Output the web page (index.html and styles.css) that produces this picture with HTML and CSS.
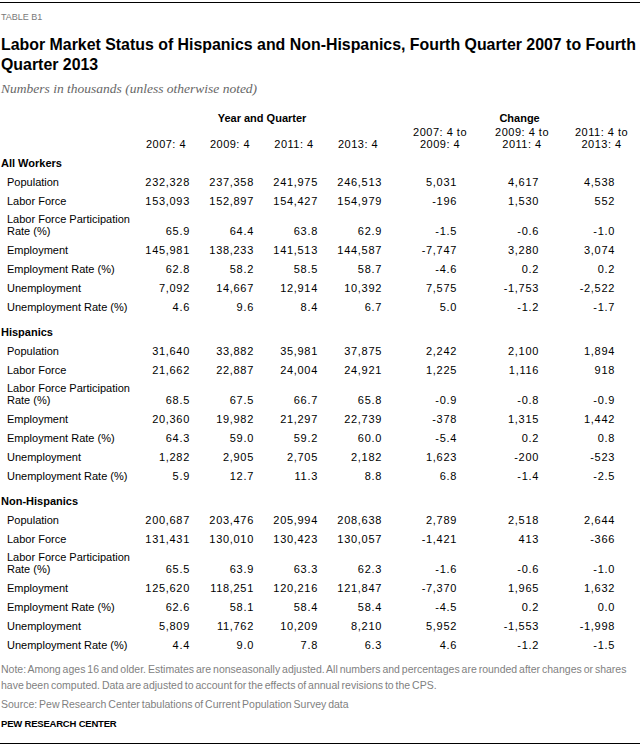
FILE: index.html
```html
<!DOCTYPE html>
<html lang="en">
<head>
<meta charset="utf-8">
<title>Table B1</title>
<link rel="stylesheet" href="styles.css">
</head>
<body>
<div class="page">
  <div class="label">TABLE B1</div>
  <h1 class="title"><span class="line">Labor Market Status of Hispanics and Non-Hispanics, Fourth Quarter 2007 to Fourth</span><br>Quarter 2013</h1>
  <div class="subtitle">Numbers in thousands (unless otherwise noted)</div>
  <table class="data">
    <colgroup>
      <col class="c-label"><col class="c-year"><col class="c-year"><col class="c-year"><col class="c-year"><col class="c-ch1"><col class="c-ch2"><col class="c-ch3">
    </colgroup>
    <thead>
      <tr class="group-row">
        <th></th>
        <th colspan="4" class="group">Year and Quarter</th>
        <th colspan="3" class="group ch1">Change</th>
      </tr>
      <tr class="head-row">
        <th></th>
        <th class="yh">2007: 4</th>
        <th class="yh">2009: 4</th>
        <th class="yh">2011: 4</th>
        <th class="yh">2013: 4</th>
        <th class="yh ch1">2007: 4 to<br>2009: 4</th>
        <th class="yh">2009: 4 to<br>2011: 4</th>
        <th class="yh">2011: 4 to<br>2013: 4</th>
      </tr>
    </thead>
    <tbody>
      <tr class="sec first"><td colspan="8">All Workers</td></tr>
      <tr><td>Population</td><td>232,328</td><td>237,358</td><td>241,975</td><td>246,513</td><td>5,031</td><td>4,617</td><td>4,538</td></tr>
      <tr><td>Labor Force</td><td>153,093</td><td>152,897</td><td>154,427</td><td>154,979</td><td>-196</td><td>1,530</td><td>552</td></tr>
      <tr class="dbl"><td>Labor Force Participation<br>Rate (%)</td><td>65.9</td><td>64.4</td><td>63.8</td><td>62.9</td><td>-1.5</td><td>-0.6</td><td>-1.0</td></tr>
      <tr><td>Employment</td><td>145,981</td><td>138,233</td><td>141,513</td><td>144,587</td><td>-7,747</td><td>3,280</td><td>3,074</td></tr>
      <tr><td>Employment Rate (%)</td><td>62.8</td><td>58.2</td><td>58.5</td><td>58.7</td><td>-4.6</td><td>0.2</td><td>0.2</td></tr>
      <tr><td>Unemployment</td><td>7,092</td><td>14,667</td><td>12,914</td><td>10,392</td><td>7,575</td><td>-1,753</td><td>-2,522</td></tr>
      <tr><td>Unemployment Rate (%)</td><td>4.6</td><td>9.6</td><td>8.4</td><td>6.7</td><td>5.0</td><td>-1.2</td><td>-1.7</td></tr>

      <tr class="sec"><td colspan="8">Hispanics</td></tr>
      <tr><td>Population</td><td>31,640</td><td>33,882</td><td>35,981</td><td>37,875</td><td>2,242</td><td>2,100</td><td>1,894</td></tr>
      <tr><td>Labor Force</td><td>21,662</td><td>22,887</td><td>24,004</td><td>24,921</td><td>1,225</td><td>1,116</td><td>918</td></tr>
      <tr class="dbl"><td>Labor Force Participation<br>Rate (%)</td><td>68.5</td><td>67.5</td><td>66.7</td><td>65.8</td><td>-0.9</td><td>-0.8</td><td>-0.9</td></tr>
      <tr><td>Employment</td><td>20,360</td><td>19,982</td><td>21,297</td><td>22,739</td><td>-378</td><td>1,315</td><td>1,442</td></tr>
      <tr><td>Employment Rate (%)</td><td>64.3</td><td>59.0</td><td>59.2</td><td>60.0</td><td>-5.4</td><td>0.2</td><td>0.8</td></tr>
      <tr><td>Unemployment</td><td>1,282</td><td>2,905</td><td>2,705</td><td>2,182</td><td>1,623</td><td>-200</td><td>-523</td></tr>
      <tr><td>Unemployment Rate (%)</td><td>5.9</td><td>12.7</td><td>11.3</td><td>8.8</td><td>6.8</td><td>-1.4</td><td>-2.5</td></tr>

      <tr class="sec"><td colspan="8">Non-Hispanics</td></tr>
      <tr><td>Population</td><td>200,687</td><td>203,476</td><td>205,994</td><td>208,638</td><td>2,789</td><td>2,518</td><td>2,644</td></tr>
      <tr><td>Labor Force</td><td>131,431</td><td>130,010</td><td>130,423</td><td>130,057</td><td>-1,421</td><td>413</td><td>-366</td></tr>
      <tr class="dbl"><td>Labor Force Participation<br>Rate (%)</td><td>65.5</td><td>63.9</td><td>63.3</td><td>62.3</td><td>-1.6</td><td>-0.6</td><td>-1.0</td></tr>
      <tr><td>Employment</td><td>125,620</td><td>118,251</td><td>120,216</td><td>121,847</td><td>-7,370</td><td>1,965</td><td>1,632</td></tr>
      <tr><td>Employment Rate (%)</td><td>62.6</td><td>58.1</td><td>58.4</td><td>58.4</td><td>-4.5</td><td>0.2</td><td>0.0</td></tr>
      <tr><td>Unemployment</td><td>5,809</td><td>11,762</td><td>10,209</td><td>8,210</td><td>5,952</td><td>-1,553</td><td>-1,998</td></tr>
      <tr><td>Unemployment Rate (%)</td><td>4.4</td><td>9.0</td><td>7.8</td><td>6.3</td><td>4.6</td><td>-1.2</td><td>-1.5</td></tr>
    </tbody>
  </table>
  <p class="note">Note: Among ages 16 and older. Estimates are nonseasonally adjusted. All numbers and percentages are rounded after changes or shares<br>have been computed. Data are adjusted to account for the effects of annual revisions to the CPS.</p>
  <p class="source">Source: Pew Research Center tabulations of Current Population Survey data</p>
  <p class="brand">PEW RESEARCH CENTER</p>
</div>
</body>
</html>
```

FILE: styles.css
```css
html, body {
  margin: 0;
  padding: 0;
  background: #fff;
}
body {
  font-family: "Liberation Sans", Arial, sans-serif;
  color: #000;
}
.page {
  width: 640px;
  box-sizing: border-box;
  margin-top: 2px;
  border-top: 1px solid #000;
  border-bottom: 1px solid #000;
  padding: 0 0 11px 1px;
}
.label {
  margin-top: 8px;
  font-size: 9px;
  line-height: 12px;
  color: #7a7a7a;
}
.title {
  margin: 12px 0 0;
  font-family: "Liberation Sans", Arial, sans-serif;
  font-weight: bold;
  font-size: 15.9px;
  line-height: 20px;
  color: #000;
}
.title .line {
  white-space: nowrap;
}
.subtitle {
  margin-top: 6px;
  font-family: "Liberation Serif", serif;
  font-style: italic;
  font-size: 13.5px;
  line-height: 16px;
  color: #666;
}
.data {
  margin-top: 14px;
  width: 639px;
  table-layout: fixed;
  border-collapse: collapse;
  border-spacing: 0;
  font-size: 11px;
}
.c-label { width: 133px; }
.c-year { width: 64px; }
.c-ch1 { width: 91px; }
.c-ch2 { width: 82px; }
.c-ch3 { width: 77px; }

.data th, .data td {
  padding: 0;
}
.group-row th {
  height: 14px;
  line-height: 14px;
  font-weight: bold;
  text-align: center;
  vertical-align: middle;
}
.head-row th {
  height: 28px;
  box-sizing: border-box;
  padding-bottom: 3px;
  line-height: 12px;
  font-weight: normal;
  text-align: center;
  vertical-align: bottom;
}
.yh {
  letter-spacing: 0.5px;
}
.data th.ch1 {
  padding-left: 9px;
}
.data tbody td {
  padding: 3px 8px 4px 0;
  line-height: 12px;
  text-align: right;
  vertical-align: bottom;
  letter-spacing: 0.7px;
  white-space: nowrap;
}
.data tbody td:first-child {
  padding-left: 6px;
  padding-right: 0;
  text-align: left;
  letter-spacing: 0;
}
.data tbody td:nth-child(6) { padding-right: 24px; }
.data tbody td:nth-child(7) { padding-right: 24px; }
.data tbody td:nth-child(8) { padding-right: 25px; }
.data tbody tr.dbl td {
  padding-top: 2px;
}
.data tbody tr.sec td {
  padding: 9px 0 4px 0;
  font-weight: bold;
  text-align: left;
  letter-spacing: 0;
}
.data tbody tr.sec.first td {
  padding-top: 4px;
}
.note, .source {
  margin: 0;
  font-size: 10.5px;
  line-height: 16px;
  color: #7f7f7f;
  word-spacing: -1px;
}
.note {
  margin-top: 6px;
}
.source {
  margin-top: 3px;
}
.brand {
  margin: 4px 0 0;
  font-weight: bold;
  font-size: 9.5px;
  letter-spacing: -0.2px;
  line-height: 16px;
  color: #000;
}
```
